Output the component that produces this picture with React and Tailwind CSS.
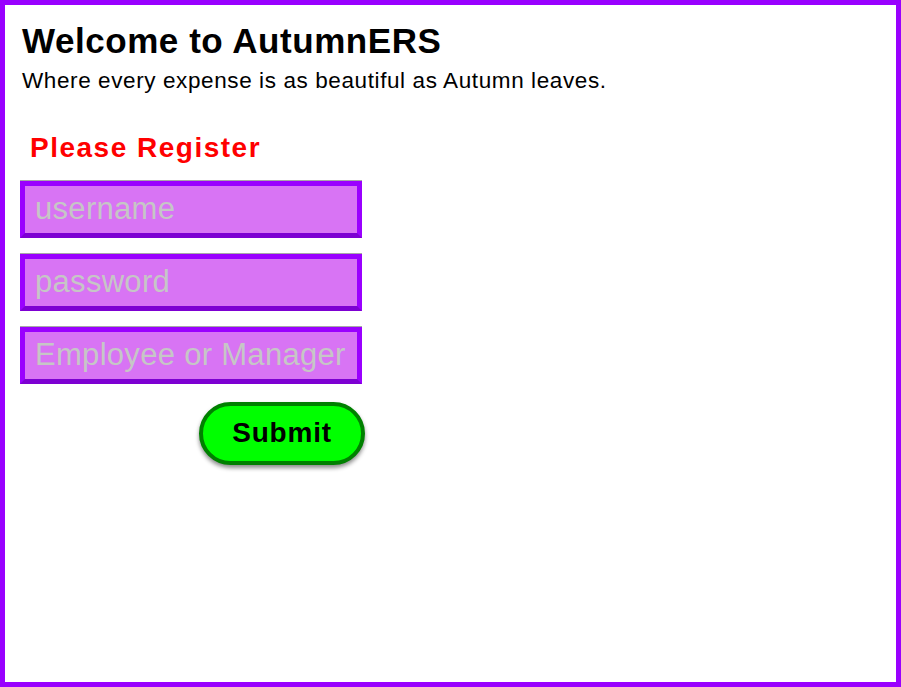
export default function App() {
  const font = { fontFamily: '"Liberation Sans", Arial, Helvetica, sans-serif' };
  const inputs = ["username", "password", "Employee or Manager"];
  return (
    <div
      className="h-[687px] w-full border-[5px] border-[#9900ff] bg-white pl-[15px] pt-[18px] text-black"
      style={font}
    >
      <div className="pl-[2px]">
        <h1 className="text-[35px] font-bold leading-none tracking-[0.55px]">Welcome to AutumnERS</h1>
        <p className="mt-[12px] text-[22.5px] leading-none tracking-[0.6px]">
          Where every expense is as beautiful as Autumn leaves.
        </p>
      </div>
      <h2 className="ml-[10px] mt-[41px] text-[28px] font-bold leading-none tracking-[1.5px] text-[#ff0000]">
        Please Register
      </h2>
      <form className="mt-[18px] flex w-[342px] flex-col gap-[15px]" onSubmit={(e) => e.preventDefault()}>
        {inputs.map((p) => (
          <div key={p} className="border-t border-[#a8a8a8]">
            <input
              placeholder={p}
              className="block h-[57px] w-[342px] border-[5px] border-[#9a00ff] border-b-[#7d00d2] bg-[#d874f4] pl-[10px] text-[31px] tracking-[0.3px] text-black outline-none placeholder:text-[#c6c6c6]"
              style={font}
            />
          </div>
        ))}
        <div className="mt-[3px] pl-[179px]">
          <button
            type="submit"
            className="h-[63px] w-[166px] rounded-full border-[4px] border-[#008000] bg-[#00ff00] text-[28px] font-bold tracking-[0.8px] text-black shadow-[0_3px_4px_rgba(0,0,0,0.45)]"
            style={font}
          >
            Submit
          </button>
        </div>
      </form>
    </div>
  );
}
